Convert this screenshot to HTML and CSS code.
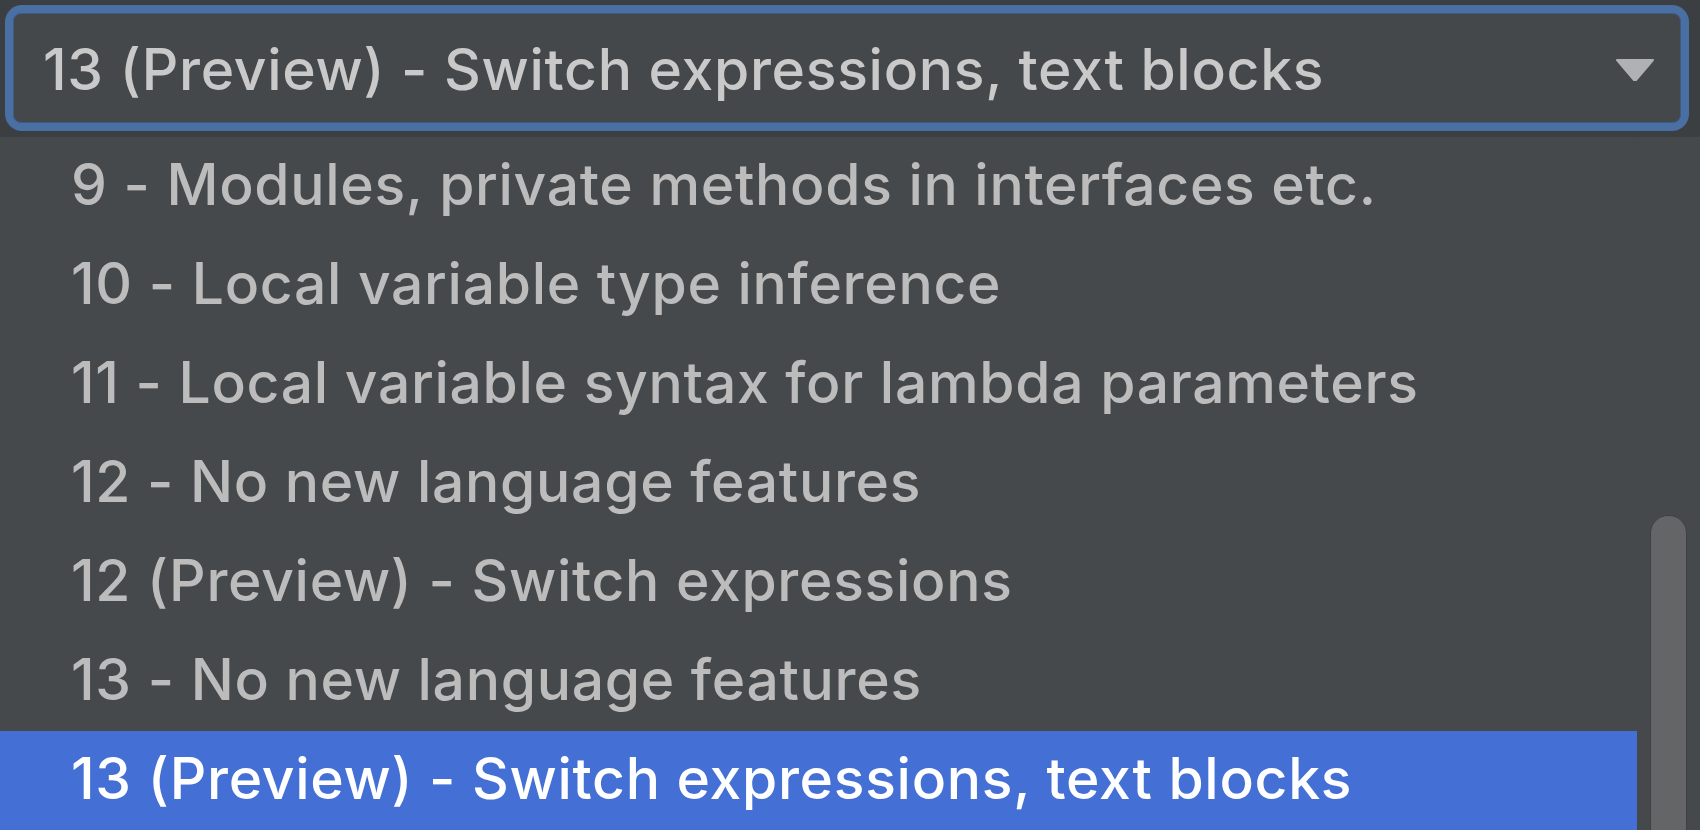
FILE: index.html
```html
<!DOCTYPE html>
<html lang="en">
<head>
    <meta charset="UTF-8">
    <meta name="viewport" content="width=device-width, initial-scale=1.0">
    <title>Language level</title>
    <link rel="stylesheet" href="styles.css">
</head>
<body>
    <div class="comboRing">
        <div class="combo">
            <span class="comboText">13 (Preview) - Switch expressions, text blocks</span>
            <svg class="comboArrow" width="40" height="22" viewBox="0 0 40 22">
                <path d="M2 1 L38 1 L21 21 L19 21 Z" fill="#afb1b3" stroke="#afb1b3" stroke-width="2" stroke-linejoin="round"/>
            </svg>
        </div>
    </div>

    <div class="popup">
        <ul class="list">
            <li class="item">9 - Modules, private methods in interfaces etc.</li>
            <li class="item">10 - Local variable type inference</li>
            <li class="item">11 - Local variable syntax for lambda parameters</li>
            <li class="item">12 - No new language features</li>
            <li class="item">12 (Preview) - Switch expressions</li>
            <li class="item">13 - No new language features</li>
            <li class="item selected">13 (Preview) - Switch expressions, text blocks</li>
        </ul>
        <div class="scrollTrack">
            <div class="scrollThumb"></div>
        </div>
    </div>
</body>
</html>
```

FILE: styles.css
```css
html, body {
    margin: 0;
    height: 100%;
    overflow: hidden;
}

body {
    background-color: #3c3f41;
    font-family: Inter, "Liberation Sans", sans-serif;
    font-size: 57px;
    font-weight: 500;
    letter-spacing: 0.7px;
}

.comboRing {
    margin: 5px 11px 0 5px;
    padding: 8px;
    border-radius: 17px;
    background-color: #4a6fa3;
}

.combo {
    display: flex;
    align-items: center;
    justify-content: space-between;
    height: 108px;
    padding: 0 25px 0 29px;
    border: 1px solid #3d5b86;
    border-radius: 8px;
    background-color: #45484a;
    color: #c9c9c9;
}

.comboText {
    padding-top: 2px;
}

.comboArrow {
    margin-top: 4px;
}

.popup {
    display: flex;
    margin-top: 6px;
    height: 700px;
    background-color: #46494b;
}

.list {
    flex: 1;
    margin: 0;
    padding: 0;
    list-style: none;
}

.item {
    height: 99px;
    line-height: 95px;
    padding-left: 71px;
    color: #bcbcbc;
    white-space: nowrap;
}

.item.selected {
    background-color: #4470d6;
    color: #ffffff;
}

.scrollTrack {
    width: 63px;
    padding-top: 378px;
    box-sizing: border-box;
    background-color: #46494b;
    border-left: 1px solid #45484a;
}

.scrollThumb {
    width: 35px;
    height: 400px;
    margin-left: 12px;
    border: 1px solid #3e4042;
    border-radius: 18px;
    background-color: #636567;
}
```
